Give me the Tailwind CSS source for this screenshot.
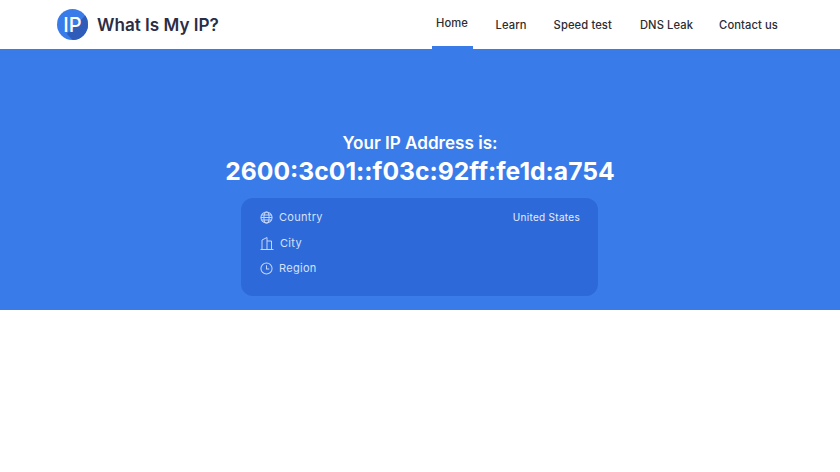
<!DOCTYPE html>
<html>
<head>
<meta charset="utf-8">
<script src="https://cdn.jsdelivr.net/npm/@tailwindcss/browser@4"></script>
</head>
<body class="bg-white font-['Inter',sans-serif]">
<div class="h-[472px] w-[840px] overflow-hidden">
<header class="flex h-[49px] items-center justify-between pl-[57px] pr-[62px]">
  <div class="flex items-center gap-[9px]">
    <div class="relative flex h-[31px] w-[31px] items-center justify-center overflow-hidden rounded-full bg-[#3a7bea]">
      <div class="absolute left-[16px] top-[10px] h-[30px] w-[30px] rotate-45 bg-[#2e5cb8]"></div>
      <span class="relative text-[20px] font-medium leading-none text-white">IP</span>
    </div>
    <span class="text-[17.1px] font-semibold text-[#2a2d45]">What Is My IP?</span>
  </div>
  <nav class="flex h-[49px] text-[11.2px] font-medium leading-[16px] tracking-[0.1px] text-[#2b2c31]">
    <a class="relative flex w-[41px] justify-center pt-[15px] whitespace-nowrap">Home<span class="absolute bottom-0 left-0 h-[3px] w-[41px] bg-[#3a7bea]"></span></a>
    <a class="ml-[23px] pt-[17px]">Learn</a>
    <a class="ml-[27px] pt-[17px]">Speed test</a>
    <a class="ml-[28px] pt-[17px]">DNS Leak</a>
    <a class="ml-[26px] pt-[17px]">Contact us</a>
  </nav>
</header>
<main class="flex h-[261px] flex-col items-center bg-[#3a7bea] pt-[82px] text-white">
  <div class="text-[17.1px] font-semibold leading-[24px]">Your IP Address is:</div>
  <div class="text-[24.7px] font-bold leading-[32px]">2600:3c01::f03c:92ff:fe1d:a754</div>
  <div class="mr-[1px] mt-[11px] h-[98px] w-[357px] rounded-[12px] bg-[#2d69d8] pl-[19px] pr-[18px] pt-[9px] text-[11px] tracking-[0.3px] text-[#d5e2fb]">
    <div class="flex h-[20px] items-center justify-between">
      <div class="flex items-center gap-[6px]">
        <svg class="h-[13px] w-[13px]" viewBox="0 0 14 14" fill="none" stroke="#c4d6f8" stroke-width="1.1"><circle cx="7" cy="7" r="6"/><ellipse cx="7" cy="7" rx="2.8" ry="6"/><path d="M1 7h12M1.8 4.2h10.4M1.8 9.8h10.4"/></svg>
        <span>Country</span>
      </div>
      <span class="text-[10px] text-[#e6eefd]">United States</span>
    </div>
    <div class="mt-[6px] flex h-[20px] items-center gap-[6px]">
      <svg class="h-[14px] w-[14px]" viewBox="0 0 14 14" fill="none" stroke="#c4d6f8" stroke-width="1"><path d="M0.5 13.5h13M2 13.5V4L7 1.5v12M7 5h4.5v8.5"/></svg>
      <span>City</span>
    </div>
    <div class="mt-[5px] flex h-[20px] items-center gap-[6px]">
      <svg class="h-[13px] w-[13px]" viewBox="0 0 14 14" fill="none" stroke="#c4d6f8" stroke-width="1.1"><circle cx="7" cy="7" r="6"/><path d="M7 3.5V7.5H10"/></svg>
      <span>Region</span>
    </div>
  </div>
</main>
</div>
</body>
</html>
